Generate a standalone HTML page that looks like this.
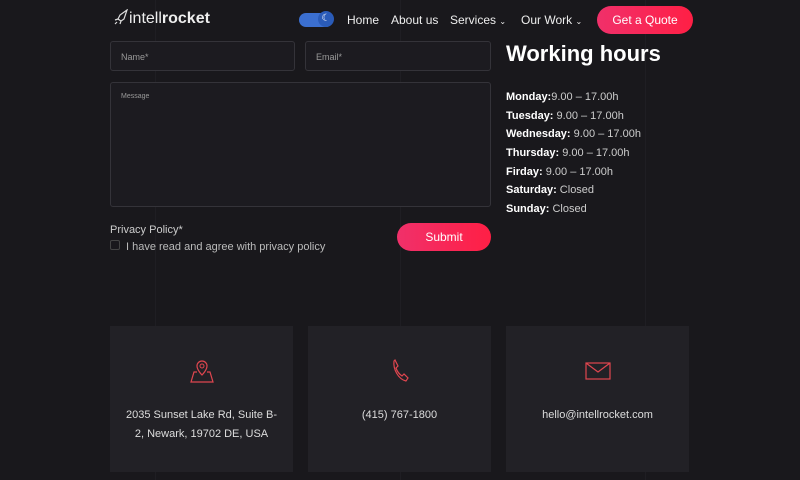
<!DOCTYPE html>
<html><head><style>
*{margin:0;padding:0;box-sizing:border-box}
body{width:800px;height:480px;background:#19181c;font-family:"Liberation Sans",sans-serif;color:#ddd;position:relative;overflow:hidden}
.a{position:absolute}
.vl{position:absolute;top:0;bottom:0;width:1px;background:#1f1e23}
.inp{position:absolute;border:1px solid #343339;border-radius:3px;background:#1c1b20;color:#999;font-size:9px;padding:10px}
.btn{position:absolute;border-radius:16px;background:linear-gradient(90deg,#f0306a,#ff1f45);color:#fff;font-size:12px;text-align:center}
.nav{position:absolute;top:13px;font-size:12px;color:#eee}
.card{position:absolute;top:326px;width:183px;height:146px;background:#222126;text-align:center;font-size:11px;color:#ddd;line-height:19px}
.wh{position:absolute;left:506px;font-size:11px;color:#ccc}
.wh b{color:#fff}
</style></head><body>
<div class="vl" style="left:155px"></div><div class="vl" style="left:400px"></div><div class="vl" style="left:645px"></div>
<div class="a" style="left:114px;top:9px;font-size:16px;color:#eee"><svg width="15" height="16" viewBox="0 0 15 16" style="vertical-align:-2px"><path d="M13 1 L6 6 L4 10 L7 12 L10 10 L13 1Z M4 10 L1 11 M7 12 L6 15 M3 13 L1 15" stroke="#ddd" fill="none" stroke-width="1.2"/></svg>intell<b>rocket</b></div>
<div class="a" style="left:299px;top:13px;width:34px;height:14px;border-radius:7px;background:#3b6fd0"></div>
<div class="a" style="left:318px;top:11px;width:16px;height:16px;border-radius:50%;background:#2a5bb8;color:#fff;font-size:10px;text-align:center;line-height:16px">☾</div>
<div class="nav" style="left:347px">Home</div>
<div class="nav" style="left:391px">About us</div>
<div class="nav" style="left:450px">Services <span style="font-size:8px">⌄</span></div>
<div class="nav" style="left:521px">Our Work <span style="font-size:8px">⌄</span></div>
<div class="btn" style="left:597px;top:6px;width:96px;height:28px;line-height:28px">Get a Quote</div>
<div class="inp" style="left:110px;top:41px;width:185px;height:30px">Name*</div>
<div class="inp" style="left:305px;top:41px;width:186px;height:30px">Email*</div>
<div class="inp" style="left:110px;top:82px;width:381px;height:125px;font-size:7px">Message</div>
<div class="a" style="left:110px;top:224px;font-size:11px;color:#ccc">Privacy Policy*</div>
<div class="a" style="left:110px;top:240px;width:10px;height:10px;border:1px solid #444;border-radius:2px"></div>
<div class="a" style="left:126px;top:241px;font-size:11px;color:#bbb">I have read and agree with privacy policy</div>
<div class="btn" style="left:397px;top:223px;width:94px;height:28px;line-height:28px">Submit</div>
<div class="a" style="left:506px;top:41px;font-size:22px;font-weight:bold;color:#fff">Working hours</div>
<div class="wh" style="top:91px"><b>Monday:</b>9.00 – 17.00h</div>
<div class="wh" style="top:110px"><b>Tuesday:</b> 9.00 – 17.00h</div>
<div class="wh" style="top:128px"><b>Wednesday:</b> 9.00 – 17.00h</div>
<div class="wh" style="top:147px"><b>Thursday:</b> 9.00 – 17.00h</div>
<div class="wh" style="top:166px"><b>Firday:</b> 9.00 – 17.00h</div>
<div class="wh" style="top:184px"><b>Saturday:</b> Closed</div>
<div class="wh" style="top:203px"><b>Sunday:</b> Closed</div>
<div class="card" style="left:110px"><svg width="28" height="28" viewBox="0 0 28 28" style="margin-top:31px"><path d="M14 4a5 5 0 0 1 5 5c0 4-5 9-5 9s-5-5-5-9a5 5 0 0 1 5-5z" fill="none" stroke="#e0464f" stroke-width="1.2"/><circle cx="14" cy="9" r="2" fill="none" stroke="#e0464f"/><path d="M9 15H6L3 25H25L22 15H19" fill="none" stroke="#e0464f" stroke-width="1.2"/></svg><div style="margin-top:14px">2035 Sunset Lake Rd, Suite B-<br>2, Newark, 19702 DE, USA</div></div>
<div class="card" style="left:308px"><svg width="28" height="28" viewBox="0 0 28 28" style="margin-top:31px"><path d="M9 3l3 6-2 2c1 3 3 6 6 8l2-2 4 4-2 3C12 22 7 12 8 4z" fill="none" stroke="#e0464f" stroke-width="1.2"/></svg><div style="margin-top:14px">(415) 767-1800</div></div>
<div class="card" style="left:506px"><svg width="28" height="28" viewBox="0 0 28 28" style="margin-top:31px"><rect x="2" y="6" width="24" height="16" fill="none" stroke="#e0464f" stroke-width="1.2"/><path d="M2 6l12 9 12-9" fill="none" stroke="#e0464f" stroke-width="1.2"/></svg><div style="margin-top:14px">hello@intellrocket.com</div></div>
</body></html>
